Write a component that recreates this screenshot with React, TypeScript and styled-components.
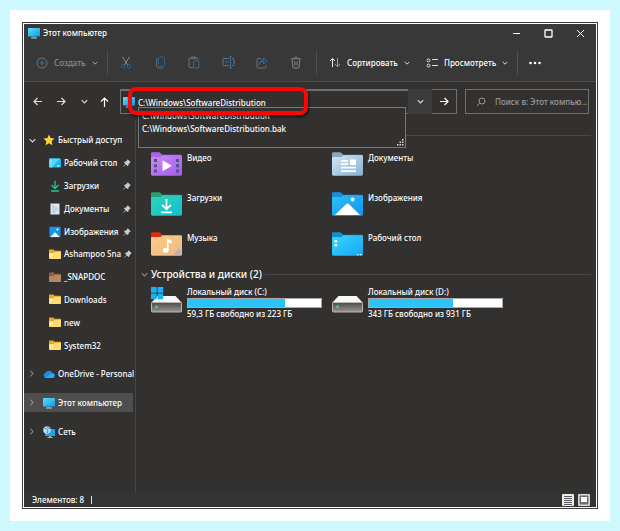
import React from "react";
import styled, { createGlobalStyle, css } from "styled-components";

const Global = createGlobalStyle`
  * { box-sizing: border-box; }
  body { margin: 0; background: #cff8ff; font-family: "Noto Sans", "Open Sans", sans-serif; font-size: 8px; font-weight: 500; line-height: 12px; color: #fff; }
  button, input { font: inherit; color: inherit; background: none; border: 0; padding: 0; margin: 0; outline: none; }
  ul { list-style: none; margin: 0; padding: 0; }
  h2 { margin: 0; }
  svg { display: block; flex: none; }
`;

const Page = styled.div`
  min-height: 100vh;
  border: 10px solid #cff8ff;
  background: #fff;
  padding: 12px;
  display: flex;
`;
const Frame = styled.div`
  flex: 1;
  min-width: 0;
  display: flex;
  border: 1px solid #3c3c3c;
  padding: 1px;
  background: #fff;
`;
const Win = styled.main`
  flex: 1;
  min-width: 0;
  display: flex;
  flex-direction: column;
  background: #32312f;
`;
const TitleBar = styled.header`
  display: flex;
  align-items: center;
  height: 18px;
  padding-left: 4px;
  gap: 3px;
  background: #383838;
`;
const Title = styled.span`
  flex: 1;
  white-space: nowrap;
`;
const WinButtons = styled.div`
  display: flex;
`;
const WinButton = styled.button`
  width: 32px;
  height: 18px;
  display: grid;
  place-items: center;
`;
const Toolbar = styled.div`
  display: flex;
  align-items: center;
  height: 40px;
  padding-top: 2px;
  background: #383838;
  border-bottom: 1px solid #4c4c4c;
`;
const ToolGroup = styled.div`
  display: flex;
  padding: 0 3px 0 1px;
`;
const ToolButton = styled.button`
  width: 34px;
  height: 30px;
  display: grid;
  place-items: center;
`;
const TextButton = styled.button<{ $w: number; $dim?: boolean }>`
  width: ${(p) => p.$w}px;
  height: 30px;
  padding: 0 9px 0 12px;
  display: flex;
  align-items: center;
  gap: 6px;
  white-space: nowrap;
  color: ${(p) => (p.$dim ? "#8c8c8c" : "#fff")};
`;
const Sep = styled.span`
  width: 1px;
  height: 24px;
  background: #505050;
`;
const NavRow = styled.div`
  display: flex;
  align-items: center;
  height: 39px;
  padding: 0 7px 0 2px;
`;
const NavButton = styled.button<{ $w: number }>`
  width: ${(p) => p.$w}px;
  height: 24px;
  display: grid;
  place-items: center;
`;
const Address = styled.div`
  position: relative;
  flex: 1;
  height: 25px;
  margin-left: 6px;
  display: flex;
  align-items: center;
  border: 1px solid #707070;
  border-top-width: 2px;
  border-right: 0;
  padding-left: 2px;
  gap: 3px;
`;
const AddressInput = styled.input`
  flex: 1;
  min-width: 0;
  height: 20px;
`;
const Suggestions = styled.ul`
  position: absolute;
  left: 17px;
  right: 2px;
  top: 16px;
  height: 41px;
  padding: 1px 3px;
  border: 1px solid #777;
  background: #32312f;
  line-height: 13px;
`;
const Grip = styled.li`
  position: absolute;
  right: 1px;
  bottom: 1px;
`;
const Highlight = styled.div`
  position: absolute;
  left: 7px;
  top: -4px;
  width: 180px;
  height: 28px;
  border: 4px solid #fb0505;
  border-radius: 8px;
  box-shadow: 1px 2px 3px rgba(0, 0, 0, 0.6);
`;
const DropButton = styled.button`
  width: 24px;
  height: 25px;
  background: #3b3b3b;
  display: grid;
  place-items: center;
`;
const GoButton = styled.button`
  width: 25px;
  height: 25px;
  border: 1px solid #707070;
  border-left: 0;
  display: grid;
  place-items: center;
`;
const Search = styled.label`
  width: 124px;
  height: 25px;
  margin-left: 8px;
  padding: 0 0 0 10px;
  border: 1px solid #707070;
  display: flex;
  align-items: center;
  gap: 9px;
`;
const SearchInput = styled.input`
  flex: 1;
  min-width: 0;
  text-overflow: ellipsis;
  &::placeholder { color: #9a9aa0; opacity: 1; }
`;
const Body = styled.div`
  flex: 1;
  min-height: 0;
  display: flex;
`;
const Sidebar = styled.nav`
  width: 112px;
  padding: 8px 2px 0 0;
  border-right: 1px solid #454545;
`;
const QuickList = styled.ul`
  height: 228px;
  display: flex;
  flex-direction: column;
`;
const QuickItem = styled.li`
  flex: 1;
  display: flex;
  align-items: center;
`;
const TreeButton = styled.button<{ $child?: boolean; $on?: boolean }>`
  width: 100%;
  height: 19px;
  padding: 0 ${(p) => (p.$child ? 2 : 0)}px 0 ${(p) => (p.$child ? 25 : 5)}px;
  display: flex;
  align-items: center;
  text-align: left;
  white-space: nowrap;
  gap: 3px;
  ${(p) => p.$on && css`background: #4e4e4e;`}
`;
const TreeLabel = styled.span`
  flex: 1;
`;
const Arrow = styled.span`
  flex: none;
  width: 11px;
`;
const Roots = styled.ul`
  padding-top: 7px;
  display: grid;
  grid-template-columns: minmax(0, 1fr);
  gap: 10px;
`;
const Content = styled.section`
  flex: 1;
  min-width: 0;
  padding: 7px 5px 0 5px;
`;
const GroupHead = styled.h2`
  height: 14px;
  display: flex;
  align-items: center;
  gap: 3px;
  font-size: 10px;
  font-weight: 500;
  line-height: 14px;
  white-space: nowrap;
`;
const Rule = styled.span`
  flex: 1;
  height: 1px;
  background: #484848;
`;
const Tiles = styled.ul`
  display: grid;
  grid-template-columns: 181px 181px;
  grid-auto-rows: 35px;
  row-gap: 5px;
  padding: 10px 0 0 10px;
`;
const Tile = styled.li`
  display: flex;
  gap: 5px;
`;
const TileLabel = styled.span`
  white-space: nowrap;
`;
const Disks = styled(Tiles)`
  padding-top: 5px;
`;
const DiskInfo = styled.div`
  width: 135px;
  white-space: nowrap;
`;
const Meter = styled.div`
  height: 10px;
  border: 1px solid #a9a9a9;
  background: #fff;
`;
const Fill = styled.div`
  height: 100%;
  background: #2bc3fa;
`;
const StatusBar = styled.footer`
  display: flex;
  align-items: center;
  height: 15px;
  padding: 0 4px 0 8px;
  background: #333;
`;
const Count = styled.span`
  flex: 1;
  display: flex;
  align-items: center;
  gap: 7px;
`;
const Caret = styled.span`
  width: 1px;
  height: 8px;
  background: #ddd;
`;
const ViewButton = styled.button`
  width: 16px;
  display: grid;
  place-items: center;
`;

const Down = ({ c = "#d8d8d8", s = 6 }: { c?: string; s?: number }) => (
  <svg width={s} height={s} viewBox="0 0 6 6"><path d="M.6 1.8 3 4.2l2.4-2.4" fill="none" stroke={c} strokeWidth="1" /></svg>
);
const Right = () => (
  <svg width="6" height="7" viewBox="0 0 6 7"><path d="M1.3.8 4.2 3.5 1.3 6.2" fill="none" stroke="#aaa" strokeWidth="1" /></svg>
);
const Monitor = () => (
  <svg width="12" height="12" viewBox="0 0 12 12">
    <defs><linearGradient id="mon" x1="0" y1="0" x2="1" y2="1"><stop stopColor="#55e4fb" /><stop offset="1" stopColor="#1494e0" /></linearGradient></defs>
    <path d="M4.5 9h3v2h-3z" fill="#1c83b8" /><path d="M3 10.5h6v1H3z" fill="#9fd3ea" /><rect y="1" width="12" height="8.5" rx=".8" fill="url(#mon)" />
  </svg>
);

const line = { fill: "none", strokeWidth: 1 };
const Cut = () => (
  <svg width="12" height="13" viewBox="0 0 12 13" {...line}><path d="M2.5.8 7.7 9M9.5.8 4.3 9" stroke="#8a8a8a" /><circle cx="3.2" cy="10.3" r="1.8" stroke="#2c6395" /><circle cx="8.8" cy="10.3" r="1.8" stroke="#2c6395" /></svg>
);
const Copy = () => (
  <svg width="11" height="13" viewBox="0 0 11 13" {...line}><path d="M2.5 2.5h-1v8l1.5 1.600h4.500v-1" stroke="#686868" /><rect x="3.500" y="1" width="6" height="9.500" rx="1" stroke="#286caf" strokeDasharray="2 .6" /></svg>
);
const Paste = () => (
  <svg width="12" height="13" viewBox="0 0 12 13" {...line}><path d="M5 11.5H2a1 1 0 0 1-1-1V3a1 1 0 0 1 1-1h7a1 1 0 0 1 1 1v1M3.5 2V1h4v1.8h-4" stroke="#707070" /><rect x="5.5" y="5" width="5.5" height="7" rx="1" stroke="#286caf" /></svg>
);
const Rename = () => (
  <svg width="13" height="13" viewBox="0 0 13 13" {...line}><path d="M7 2.5H2a1 1 0 0 0-1 1v5.2a1 1 0 0 0 1 1h5M10 2.5h1a1 1 0 0 1 1 1v5.2a1 1 0 0 1-1 1h-1" stroke="#707070" /><path d="M3 6h3.5M7 .8h3M7 12h3M8.5.8V12" stroke="#2f70aa" /></svg>
);
const Share = () => (
  <svg width="12" height="12" viewBox="0 0 12 12" {...line}><path d="M5 1.5H2a1 1 0 0 0-1 1V10a1 1 0 0 0 1 1h7a1 1 0 0 0 1-1V8.5" stroke="#707070" /><path d="M3.2 8c.4-2.7 1.8-3.7 4.2-3.7V6.7L11 3.8 7.4 1v2C4.7 3 3.2 4.8 3.2 8Z" stroke="#2f70aa" /></svg>
);
const Trash = () => (
  <svg width="12" height="13" viewBox="0 0 12 13" {...line} stroke="#828282"><path d="M1 2.8h10M4.3 2.5c0-2 3.4-2 3.4 0M2.1 3l.8 8.2a1 1 0 0 0 1 .8h4.2a1 1 0 0 0 1-.8L9.9 3M4.9 5.3v4.2M7.1 5.3v4.2" /></svg>
);
const Pin = () => (
  <svg width="8" height="8" viewBox="0 0 8 8"><path d="M4.7.3 7.7 3.2 6.8 3.9 5.7 5 5.3 6.7 4.6 7 2.9 5.4.5 7.7.2 7.4 2.5 5 1 3.4l.5-.6L3 2.6 4.1 1.3Z" fill="#c8cdd2" /></svg>
);

type Kind = "video" | "docs" | "down" | "pics" | "music" | "desk";
const folderTone: Record<Kind, [string, string, string]> = {
  video: ["#a964ea", "#c98af7", "#a55ce8"],
  docs: ["#8ca7bd", "#d3e8f5", "#86b0d2"],
  down: ["#26a06c", "#2bd6b4", "#17bcd2"],
  pics: ["#148fdc", "#2cc0fa", "#1593ee"],
  music: ["#e32616", "#fbcd83", "#eeb88a"],
  desk: ["#128fd0", "#3ad6fb", "#18a6f4"],
};
const Folder = ({ kind }: { kind: Kind }) => {
  const [tab, a, b] = folderTone[kind];
  return (
    <svg width="31" height="24" viewBox="0 0 31 24">
      <defs><linearGradient id={"f-" + kind} x1="0" y1="0" x2="1" y2="1"><stop stopColor={a} /><stop offset="1" stopColor={b} /></linearGradient></defs>
      <path d={kind === "music" ? "M0 1.5Q0 .3 1.2.3h7.3l2.8 2.4V10H0Z" : "M0 1.5Q0 .3 1.2.3h7.3l2.8 2.4h18.4Q31 2.7 31 4v6H0Z"} fill={tab} />
      <path d="M0 6.2Q0 5 1.2 5h8.3l2-1.800h18.2Q31 3.200 31 4.500v17.800q0 1.400-1.300 1.400H1.300Q0 23.700 0 22.300Z" fill={`url(#f-${kind})`} />
      {kind === "video" && <><path d="M11.5 8.300v11l9.500-5.500Z" fill="#fff" /><path d="M3 7h3v3H3zM3 12.300h3v3H3zM3 17.600h3v3H3zM25 7h3v3h-3zM25 12.300h3v3h-3zM25 17.600h3v3h-3z" fill="#4d557e" /></>}
      {kind === "docs" && <path d="M9 8h7v1.800H9zM9 11.300h7v1.800H9zM9 14.800h15v1.800H9zM9 18.200h15V20H9zM18 7.500h6v5.500h-6z" fill="#fff" />}
      {kind === "down" && <path d="M15.5 7v10M11 12.800l4.500 4.400 4.500-4.400M10 20.300h11" fill="none" stroke="#fff" strokeWidth="1.700" />}
      {kind === "pics" && <><path d="m3 23 11-10.800q1.500-1.200 3 0L28 23Z" fill="#fff" /><circle cx="20.500" cy="7.500" r="1.900" fill="#fff" /></>}
      {kind === "music" && <><path d="M23 21.500l5-5 2 2v4h-7Z" fill="#b9afc4" /><path d="M16 18V6.800l4.600 2v2.600L17.600 10v8Z" fill="#fff" /><ellipse cx="14.700" cy="18.300" rx="2.900" ry="2.500" fill="#fff" /></>}
      {kind === "desk" && <path d="M2.500 8h2.600v2.500H2.500zM2.500 12h2.600v2.300H2.500zM25 22h1.500v1.200H25zM28 22h1.500v1.200H28z" fill="#e9fbff" />}
    </svg>
  );
};
const Drive = ({ win }: { win?: boolean }) => (
  <svg width="31" height="27" viewBox="0 0 31 27">
    <defs><linearGradient id="drv" x1="0" y1="0" x2="0" y2="1"><stop stopColor="#4c4c4c" /><stop offset="1" stopColor="#99958f" /></linearGradient></defs>
    <path d="M6.500 10h18L31 17H0Z" fill="#f8f8f8" />
    <rect x=".5" y="16.500" width="30" height="9.500" rx="1" fill="url(#drv)" stroke="#b9b5b1" />
    <circle cx="5.500" cy="20.800" r="1.400" fill="#30e087" />
    {win && <path d="M0 1h5.700v5.700H0zM6.500 1h5.700v5.700H6.500zM0 7.500h5.700v5.700H0zM6.500 7.500h5.700v5.700H6.500z" fill="#1cb0f4" />}
  </svg>
);
const MiniFolder = ({ brown }: { brown?: boolean }) => (
  <svg width="12" height="11" viewBox="0 0 12 11"><path d="M0 1Q0 .5.6.5h3.800l1.200 1.200h5.800q.6 0 .6.6V5H0Z" fill={brown ? "#89603c" : "#e9a927"} /><path d="M0 4h4.600l1.200-1.200H12v6.500q0 .7-.7.7H.7Q0 10 0 9.300Z" fill={brown ? "#b18a64" : "#ffdc70"} />{brown ? <path d="M2 .5h3v2H2z" fill="#c34d3e" /> : <path d="M1 5.500h3v1H2v2H1z" fill="#fff6d8" />}</svg>
);
const Side = ({ k }: { k: string }) => {
  if (k === "folder") return <MiniFolder />;
  if (k === "brown") return <MiniFolder brown />;
  return (
    <svg width="12" height="12" viewBox="0 0 12 12">
      {k === "desk" && <><rect y="1.500" width="12" height="9" rx="1" fill="#23b3ee" /><path d="M0 2.500q0-1 1-1h10L3 10.500H1q-1 0-1-1Z" fill="#55d5fa" /><path d="M1.500 3.500h1v1h-1zM1.500 5.500h1v1h-1zM8 8.500h2.500v1H8z" fill="#eaffff" /></>}
      {k === "down" && <path d="M6 .8v7.500M2.500 5 6 8.500 9.500 5M2 11h8" fill="none" stroke="#1fc79b" strokeWidth="1.300" />}
      {k === "docs" && <><path d="M1.500.5h9v11h-9z" fill="#dbe9f2" /><path d="M3 3h2.500M3 5h6M3 7h6M3 9h4" stroke="#a5bfd2" /></>}
      {k === "pics" && <><rect x=".5" y=".8" width="11" height="10.500" rx=".8" fill="#1795e6" /><path d="m1.500 11 4.500-4.800 4.500 4.800Z" fill="#fff" /><circle cx="8.500" cy="3.500" r="1" fill="#fff" /></>}
    </svg>
  );
};
const Star = () => <svg width="12" height="12" viewBox="0 0 12 12"><path d="m6 .6 1.600 3.500 3.900.5-2.800 2.700.7 3.900L6 9.300l-3.400 1.900.7-3.900L.5 4.600l3.900-.5Z" fill="#ffcf3b" /></svg>;
const Cloud = () => <svg width="12" height="12" viewBox="0 0 12 12"><path d="M3 10a2.700 2.700 0 0 1-.4-5.300A3.700 3.700 0 0 1 9.300 5 2.500 2.500 0 0 1 9.500 10Z" fill="#1490df" /><path d="M2.500 9.800 9 5.200A2.500 2.500 0 0 1 9.500 10H3Z" fill="#2cabf2" /></svg>;
const Network = () => (
  <svg width="12" height="12" viewBox="0 0 12 12"><path d="M6 10h2v1H6zM4.500 11h5v1h-5z" fill="#86bfe0" /><rect x="2" y="3" width="10" height="7" rx=".6" fill="#1ba4ee" /><circle cx="4" cy="4" r="3.800" fill="#b7dff0" /><path d="M1.500 2q2 0 3 1.500T4 7M4 .5q.5 2 3.300 2" stroke="#3589b5" fill="none" /></svg>
);

const quick = [
  { k: "desk", t: "Рабочий стол", pin: true },
  { k: "down", t: "Загрузки", pin: true },
  { k: "docs", t: "Документы", pin: true },
  { k: "pics", t: "Изображения", pin: true },
  { k: "folder", t: "Ashampoo Sna", pin: true },
  { k: "brown", t: "_SNAPDOC" },
  { k: "folder", t: "Downloads" },
  { k: "folder", t: "new" },
  { k: "folder", t: "System32" },
];
const roots = [
  { icon: <Cloud />, t: "OneDrive - Personal" },
  { icon: <Monitor />, t: "Этот компьютер", on: true },
  { icon: <Network />, t: "Сеть" },
];
const tiles: { k: Kind; t: string }[] = [
  { k: "video", t: "Видео" },
  { k: "docs", t: "Документы" },
  { k: "down", t: "Загрузки" },
  { k: "pics", t: "Изображения" },
  { k: "music", t: "Музыка" },
  { k: "desk", t: "Рабочий стол" },
];
const disks = [
  { t: "Локальный диск (C:)", free: "59,3 ГБ свободно из 223 ГБ", used: 73, win: true },
  { t: "Локальный диск (D:)", free: "343 ГБ свободно из 931 ГБ", used: 63 },
];

export default function App() {
  return (
    <Page>
      <Global />
      <Frame>
        <Win>
          <TitleBar>
            <Monitor />
            <Title>Этот компьютер</Title>
            <WinButtons>
              <WinButton aria-label="Свернуть"><svg width="9" height="9" viewBox="0 0 9 9"><path d="M1 4.500h7" stroke="#fff" /></svg></WinButton>
              <WinButton aria-label="Развернуть"><svg width="9" height="9" viewBox="0 0 9 9"><rect x="1" y="1" width="7" height="7" rx=".5" fill="none" stroke="#fff" strokeWidth="1.300" /></svg></WinButton>
              <WinButton aria-label="Закрыть"><svg width="9" height="9" viewBox="0 0 9 9"><path d="m1 1 7 7M8 1 1 8" stroke="#fff" /></svg></WinButton>
            </WinButtons>
          </TitleBar>
          <Toolbar>
            <TextButton $w={83} $dim>
              <svg width="12" height="12" viewBox="0 0 12 12" fill="none"><circle cx="6" cy="6" r="5" stroke="#777" /><path d="M6 3.500v5M3.500 6h5" stroke="#2f70aa" /></svg>
              Создать <Down c="#aaa" />
            </TextButton>
            <Sep />
            <ToolGroup>
              <ToolButton aria-label="Вырезать"><Cut /></ToolButton>
              <ToolButton aria-label="Копировать"><Copy /></ToolButton>
              <ToolButton aria-label="Вставить"><Paste /></ToolButton>
              <ToolButton aria-label="Переименовать"><Rename /></ToolButton>
              <ToolButton aria-label="Поделиться"><Share /></ToolButton>
              <ToolButton aria-label="Удалить"><Trash /></ToolButton>
            </ToolGroup>
            <Sep />
            <TextButton $w={97}>
              <svg width="12" height="11" viewBox="0 0 12 11" fill="none"><path d="M3.500 10V1.500M1 4l2.500-2.600L6 4" stroke="#eee" /><path d="M8.500 1v8.500M6 7l2.500 2.600L11 7" stroke="#4fb2ec" /></svg>
              Сортировать <Down />
            </TextButton>
            <TextButton $w={103}>
              <svg width="12" height="10" viewBox="0 0 12 10" fill="none" stroke="#ddd"><circle cx="2.500" cy="2.400" r="1.500" /><circle cx="2.500" cy="7.600" r="1.500" /><path d="M6 1.500h6M6 7.500h6" /></svg>
              Просмотреть <Down />
            </TextButton>
            <Sep />
            <ToolButton aria-label="Ещё"><svg width="12" height="4" viewBox="0 0 12 4" fill="#fff"><circle cx="1.500" cy="2" r="1.300" /><circle cx="6" cy="2" r="1.300" /><circle cx="10.500" cy="2" r="1.300" /></svg></ToolButton>
          </Toolbar>
          <NavRow>
            <NavButton $w={23} aria-label="Назад"><svg width="9" height="9" viewBox="0 0 9 9"><path d="M9 4.500H1M4.500 1 1 4.500 4.500 8" fill="none" stroke="#ddd" strokeWidth="1.200" /></svg></NavButton>
            <NavButton $w={25} aria-label="Вперёд"><svg width="9" height="9" viewBox="0 0 9 9"><path d="M0 4.500h8M4.500 1 8 4.500 4.500 8" fill="none" stroke="#ddd" strokeWidth="1.200" /></svg></NavButton>
            <NavButton $w={20} aria-label="Недавние"><Down s={7} /></NavButton>
            <NavButton $w={20} aria-label="Вверх"><svg width="9" height="10" viewBox="0 0 9 10"><path d="M4.500 10V1M1 4.500 4.500 1 8 4.500" fill="none" stroke="#fff" strokeWidth="1.200" /></svg></NavButton>
            <Address>
              <Monitor />
              <AddressInput aria-label="Адрес" defaultValue="C:\Windows\SoftwareDistribution" />
              <Suggestions>
                <li>C:\Windows\SoftwareDistribution</li>
                <li>C:\Windows\SoftwareDistribution.bak</li>
                <Grip aria-hidden>
                  <svg width="7" height="7" viewBox="0 0 7 7"><path d="M5 0h1.500v1.500H5zM2.500 2.500H4V4H2.500zM5 2.500h1.500V4H5zM0 5h1.500v1.500H0zM2.500 5H4v1.500H2.500zM5 5h1.500v1.500H5z" fill="#ddd" /></svg>
                </Grip>
              </Suggestions>
              <Highlight />
            </Address>
            <DropButton aria-label="Предыдущие расположения"><Down s={7} /></DropButton>
            <GoButton aria-label="Перейти"><svg width="9" height="9" viewBox="0 0 9 9"><path d="M0 4.500h8M4.500 1 8 4.500 4.500 8" fill="none" stroke="#fff" strokeWidth="1.200" /></svg></GoButton>
            <Search>
              <svg width="10" height="10" viewBox="0 0 10 10"><circle cx="6" cy="4" r="3" fill="none" stroke="#999" /><path d="M3.800 6.200 1 9" stroke="#999" /></svg>
              <SearchInput aria-label="Поиск" placeholder="Поиск в: Этот компьютер" />
            </Search>
          </NavRow>
          <Body>
            <Sidebar>
              <QuickList>
                <QuickItem>
                  <TreeButton><Arrow><Down s={7} /></Arrow><Star /><TreeLabel>Быстрый доступ</TreeLabel></TreeButton>
                </QuickItem>
                {quick.map((q) => (
                  <QuickItem key={q.t}>
                    <TreeButton $child><Side k={q.k} /><TreeLabel>{q.t}</TreeLabel>{q.pin && <Pin />}</TreeButton>
                  </QuickItem>
                ))}
              </QuickList>
              <Roots>
                {roots.map((r) => (
                  <li key={r.t}>
                    <TreeButton $on={r.on}><Arrow><Right /></Arrow>{r.icon}<TreeLabel>{r.t}</TreeLabel></TreeButton>
                  </li>
                ))}
              </Roots>
            </Sidebar>
            <Content>
              <GroupHead><Rule /></GroupHead>
              <Tiles>
                {tiles.map((t) => (
                  <Tile key={t.t}><Folder kind={t.k} /><TileLabel>{t.t}</TileLabel></Tile>
                ))}
              </Tiles>
              <GroupHead><Down c="#888" s={7} />Устройства и диски (2)<Rule /></GroupHead>
              <Disks>
                {disks.map((d) => (
                  <Tile key={d.t}>
                    <Drive win={d.win} />
                    <DiskInfo>
                      {d.t}
                      <Meter><Fill style={{ width: `${d.used}%` }} /></Meter>
                      {d.free}
                    </DiskInfo>
                  </Tile>
                ))}
              </Disks>
            </Content>
          </Body>
          <StatusBar>
            <Count>Элементов: 8<Caret /></Count>
            <ViewButton aria-label="Таблица"><svg width="12" height="12" viewBox="0 0 12 12"><rect width="12" height="12" rx="1" fill="#ecece4" /><path d="M2 2.500h8M2 4.500h8M2 6.500h8M2 8.500h8M2 10.500h8" stroke="#555b60" /></svg></ViewButton>
            <ViewButton aria-label="Крупные значки"><svg width="12" height="12" viewBox="0 0 12 12"><rect width="12" height="12" rx="1" fill="#dadad8" /><rect x="1.500" y="1.500" width="9" height="9" fill="#6d7279" /><rect x="3" y="3" width="6" height="5" fill="#fff" /></svg></ViewButton>
          </StatusBar>
        </Win>
      </Frame>
    </Page>
  );
}
